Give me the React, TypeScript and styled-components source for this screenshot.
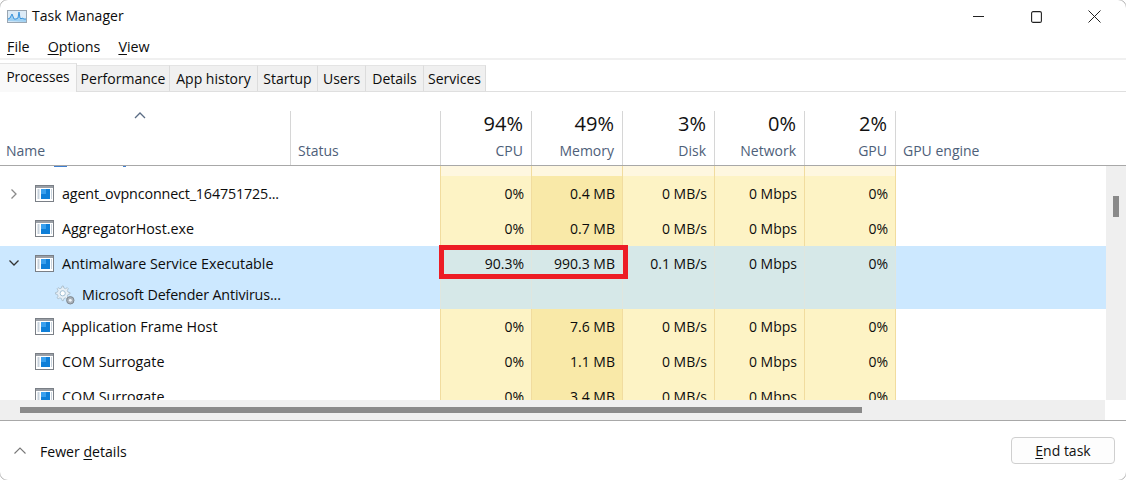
import React from "react";
import styled, { createGlobalStyle } from "styled-components";

const Global = createGlobalStyle`
  html, body { margin: 0; padding: 0; background: #fff; }
  body { font-family: "Open Sans", "Noto Sans", "Liberation Sans", sans-serif; color: #0c0c0c; overflow: hidden; }
`;

const HEAD_COLS = "291px 150px 91px 91px 92px 90px 91px 1fr";
const ROW_COLS = "290px 150px 91px 91px 92px 90px 91px 1fr";

const Window = styled.div`
  position: relative;
  width: 1126px;
  height: 480px;
  overflow: hidden;
  background: #fff;
  display: flex;
  flex-direction: column;
  font-size: 14px;
  &::after {
    content: "";
    position: absolute;
    inset: -1px;
    border: 1px solid #b5b5b5;
    border-radius: 9px;
    pointer-events: none;
  }
`;
const TitleBar = styled.div`
  height: 33px;
  flex: none;
  display: flex;
  align-items: center;
  padding-left: 7px;
`;
const TitleText = styled.span`
  margin-left: 5px;
  font-size: 14px;
  letter-spacing: 0.06px;
  position: relative;
  top: -1px;
`;
const WindowControls = styled.div`
  margin-left: auto;
  display: flex;
  align-items: center;
`;
const ControlSlot = styled.div`
  width: 58px;
  height: 33px;
  display: flex;
  align-items: center;
  justify-content: center;
  padding-right: 5px;
  box-sizing: border-box;
`;
const MenuBar = styled.div`
  height: 25px;
  flex: none;
  display: flex;
  align-items: center;
  gap: 18px;
  padding: 2px 0 0 7px;
  box-sizing: border-box;
  font-size: 14.3px;
`;
const Band = styled.div`
  height: 2px;
  flex: none;
  background: #f0f0f0;
`;
const TabBar = styled.div`
  height: 32px;
  flex: none;
  display: flex;
  align-items: flex-end;
  border-bottom: 1px solid #dfdfdf;
  box-sizing: border-box;
`;
const Tab = styled.div<{ $w: number; $active?: boolean }>`
  width: ${(p) => p.$w}px;
  height: ${(p) => (p.$active ? 29 : 26)}px;
  box-sizing: border-box;
  flex: none;
  background: ${(p) => (p.$active ? "#f9f9f9" : "#f0f0f0")};
  border-right: 1px solid #dcdcdc;
  border-top: 1px solid #e4e4e4;
  margin-bottom: ${(p) => (p.$active ? -1 : 0)}px;
  display: flex;
  align-items: center;
  justify-content: center;
  font-size: ${(p) => (p.$active ? 13.6 : 14)}px;
  padding-bottom: ${(p) => (p.$active ? 3 : 1)}px;
`;
const HeaderArea = styled.div`
  height: 74px;
  flex: none;
  padding-top: 19px;
  box-sizing: border-box;
  border-bottom: 1px solid #a8a8a8;
  position: relative;
`;
const HeaderGrid = styled.div`
  display: grid;
  grid-template-columns: ${HEAD_COLS};
  width: 1106px;
  height: 54px;
`;
const HeaderCell = styled.div<{ $end?: boolean; $noline?: boolean; $first?: boolean }>`
  position: relative;
  box-sizing: border-box;
  display: flex;
  flex-direction: column;
  justify-content: flex-end;
  align-items: ${(p) => (p.$end ? "flex-end" : "flex-start")};
  padding: 0 8px 5px ${(p) => (p.$end ? 0 : p.$first ? 6 : 7)}px;
  border-right: ${(p) => (p.$noline ? "none" : "1px solid #d6d6d6")};
`;
const Pct = styled.div`
  font-size: 20px;
  line-height: 26px;
  color: #111;
  margin-bottom: 4px;
`;
const ColLabel = styled.div`
  font-size: 14px;
  line-height: 19px;
  color: #4e6079;
`;
const SortCaret = styled.svg`
  position: absolute;
  left: 134px;
  top: 1px;
`;
const Body = styled.div`
  height: 234px;
  flex: none;
  display: flex;
`;
const Rows = styled.div`
  width: 1106px;
  flex: none;
  overflow: hidden;
`;
const Row = styled.div<{ $h: number; $sel?: boolean }>`
  display: grid;
  grid-template-columns: ${ROW_COLS};
  height: ${(p) => p.$h}px;
  background: ${(p) => (p.$sel ? "#cce8ff" : "#fff")};
  flex: none;
`;
const NameCell = styled.div<{ $sub?: boolean; $nudge?: number }>`
  grid-column: span 2;
  display: flex;
  align-items: center;
  padding-left: ${(p) => (p.$sub ? 55 : 0)}px;
  padding-top: ${(p) => p.$nudge ?? 0}px;
  box-sizing: border-box;
  font-size: 14.3px;
  white-space: nowrap;
  overflow: hidden;
`;
const ClippedNameCell = styled.div`
  grid-column: span 2;
`;
const ChevronSlot = styled.div`
  width: 35px;
  flex: none;
  display: flex;
  justify-content: flex-start;
  padding-left: 9px;
  box-sizing: border-box;
`;
const IconGap = styled.span<{ $w: number }>`
  width: ${(p) => p.$w}px;
  flex: none;
`;
const Label = styled.span<{ $tight?: boolean }>`
  letter-spacing: ${(p) => (p.$tight ? "-0.14px" : "0")};
`;
const BlueMark = styled.div`
  width: 72px;
  height: 1px;
  margin-left: 54px;
  background: linear-gradient(90deg, #3f7fd0 0 13px, transparent 13px 69px, #3f7fd0 69px 72px);
`;
const Cell = styled.div<{ $bg: string; $line: string; $nudge?: number }>`
  box-sizing: border-box;
  background: ${(p) => p.$bg};
  border-left: 1px solid ${(p) => p.$line};
  display: flex;
  align-items: center;
  justify-content: flex-end;
  padding-right: 7px;
  padding-top: ${(p) => p.$nudge ?? 0}px;
  font-size: 14px;
  white-space: nowrap;
`;
const EngineCell = styled.div<{ $line: string }>`
  border-left: 1px solid ${(p) => p.$line};
`;
const HBar = styled.div`
  height: 20px;
  flex: none;
  width: 1105px;
  background: #efefef;
  padding: 7px 0 0 20px;
  box-sizing: border-box;
`;
const HThumb = styled.div`
  width: 842px;
  height: 6px;
  background: #8a8a8a;
`;
const VBar = styled.div`
  flex: 1;
  background: #efefef;
  padding: 30px 7px 0;
  box-sizing: border-box;
`;
const VThumb = styled.div`
  width: 6px;
  height: 21px;
  background: #8a8a8a;
`;
const Footer = styled.div`
  flex: 1;
  border-top: 1px solid #a8a8a8;
  display: flex;
  align-items: center;
  padding: 0 11px 0 14px;
  position: relative;
`;
const FewerText = styled.span`
  margin-left: 14px;
  font-size: 14.1px;
  padding-top: 2px;
`;
const EndTask = styled.button`
  margin-left: auto;
  width: 104px;
  height: 27px;
  box-sizing: border-box;
  background: #fdfdfd;
  border: 1px solid #cfcfcf;
  border-radius: 4px;
  font-family: inherit;
  font-size: 14px;
  color: #111;
  padding: 0;
`;
const Highlight = styled.div`
  position: absolute;
  left: 439px;
  top: 245px;
  width: 189px;
  height: 34px;
  box-sizing: border-box;
  border: 5px solid #ed1c24;
  pointer-events: none;
`;

const AppIcon = () => (
  <svg width="19" height="17" viewBox="0 0 19 17">
    <rect x="0.5" y="0.5" width="18" height="16" fill="#fff" stroke="#7a7f86" />
    <rect x="1" y="1" width="17" height="2" fill="#9a9fa6" />
    <rect x="6" y="4" width="9" height="10" fill="#0f7fd8" />
    <rect x="6" y="4" width="5" height="5" fill="#3aa0ee" />
    <path d="M2.5 5h2M2.5 7h2M2.5 9h2M2.5 11h2M2.5 13h2M16 5h1M16 7h1M16 9h1M16 11h1M16 13h1" stroke="#8fa4b8" />
  </svg>
);

const TmIcon = () => (
  <svg width="20" height="13" viewBox="0 0 20 13">
    <rect x="0.5" y="0.5" width="19" height="12" fill="#dcebf7" stroke="#9aa6b2" />
    <path d="M1 11V9l2-1 2-4 2 5 2 0 2-1 1-6 1 6 1 1 1-1 2 1 2 0v3z" fill="#9fd0f2" />
    <path d="M1 9l2-1 2-4 2 5h2l2-1 1-6 1 6 1 1 1-1 2 1h2" fill="none" stroke="#3a94dc" />
  </svg>
);

const GearIcon = () => (
  <svg width="20" height="20" viewBox="0 0 20 20">
    <path d="M7 1l1.400 0 .5 2 1.600.7 1.800-1 1 1-1 1.800.7 1.600 2 .5v1.400l-2 .5-.7 1.600 1 1.800-1 1-1.800-1-1.600.7-.5 2H7l-.5-2-1.600-.7-1.800 1-1-1 1-1.800-.7-1.600-2-.5V7.600l2-.5.7-1.600-1-1.800 1-1 1.800 1 1.600-.7z" fill="#e6eff6" stroke="#a6bac8" strokeWidth="0.8" />
    <circle cx="7.700" cy="8.300" r="2.600" fill="#fff" stroke="#a2c0d4" />
    <circle cx="15.300" cy="15.300" r="3.700" fill="#aab2ba" stroke="#7f8890" />
    <circle cx="15.300" cy="15.300" r="1.400" fill="#f2f6fa" />
  </svg>
);

const Chevron = ({ dir, color }: { dir: "right" | "down"; color: string }) => (
  <svg width="10" height="10" viewBox="0 0 10 10">
    <path
      d={dir === "right" ? "M2.500 0.500l4.500 4.500-4.500 4.500" : "M0.500 2.500l4.500 4.500 4.500-4.500"}
      fill="none"
      stroke={color}
      strokeWidth="1.300"
    />
  </svg>
);

const tabs: [string, number, boolean?][] = [
  ["Processes", 77, true],
  ["Performance", 93],
  ["App history", 88],
  ["Startup", 60],
  ["Users", 48],
  ["Details", 58],
  ["Services", 62],
];

const YELLOW = "#fdf3c5";
const AMBER = "#f9e9a8";
const LINE = "#f1dc9f";
const SEL = "#d6e8e8";
const SEL_LINE = "#dfe6df";

type RowData = {
  name: string;
  vals: string[];
  chevron?: "right" | "down";
  h: number;
  sel?: boolean;
  tight?: boolean;
  nudge?: number;
};
const rows: RowData[] = [
  { name: "agent_ovpnconnect_164751725...", vals: ["0%", "0.4 MB", "0 MB/s", "0 Mbps", "0%"], chevron: "right", h: 35, tight: true },
  { name: "AggregatorHost.exe", vals: ["0%", "0.7 MB", "0 MB/s", "0 Mbps", "0%"], h: 35 },
  { name: "Antimalware Service Executable", vals: ["90.3%", "990.3 MB", "0.1 MB/s", "0 Mbps", "0%"], chevron: "down", h: 32, sel: true, nudge: 2 },
];
const rowsAfter: RowData[] = [
  { name: "Application Frame Host", vals: ["0%", "7.6 MB", "0 MB/s", "0 Mbps", "0%"], h: 35 },
  { name: "COM Surrogate", vals: ["0%", "1.1 MB", "0 MB/s", "0 Mbps", "0%"], h: 35 },
  { name: "COM Surrogate", vals: ["0%", "3.4 MB", "0 MB/s", "0 Mbps", "0%"], h: 35 },
];

const Under = styled.span`
  text-decoration: underline;
  text-underline-offset: 2px;
  text-decoration-thickness: 1px;
`;

const ProcessRow = ({ r }: { r: RowData }) => (
  <Row $h={r.h} $sel={r.sel}>
    <NameCell $nudge={r.nudge}>
      <ChevronSlot>
        {r.chevron && <Chevron dir={r.chevron} color={r.sel ? "#333" : "#8a8a8a"} />}
      </ChevronSlot>
      <AppIcon />
      <IconGap $w={8} />
      <Label $tight={r.tight}>{r.name}</Label>
    </NameCell>
    {r.vals.map((v, i) => (
      <Cell
        key={i}
        $nudge={r.nudge}
        $bg={r.sel ? SEL : i === 1 ? AMBER : YELLOW}
        $line={r.sel ? SEL_LINE : LINE}
      >
        {v}
      </Cell>
    ))}
    <EngineCell $line={r.sel ? SEL_LINE : LINE} />
  </Row>
);

const App = () => (
  <Window>
    <Global />
    <TitleBar>
      <TmIcon />
      <TitleText>Task Manager</TitleText>
      <WindowControls>
        <ControlSlot>
          <svg width="11" height="1"><rect width="11" height="1" fill="#222" /></svg>
        </ControlSlot>
        <ControlSlot>
          <svg width="11" height="12" viewBox="0 0 11 12">
            <rect x="0.600" y="0.600" width="9.800" height="10.800" rx="1.500" fill="none" stroke="#222" strokeWidth="1.100" />
          </svg>
        </ControlSlot>
        <ControlSlot>
          <svg width="13" height="13" viewBox="0 0 13 13">
            <path d="M0.500 0.500l12 12M12.500 0.500l-12 12" stroke="#222" strokeWidth="1" fill="none" />
          </svg>
        </ControlSlot>
      </WindowControls>
    </TitleBar>
    <MenuBar>
      <span><Under>F</Under>ile</span>
      <span><Under>O</Under>ptions</span>
      <span><Under>V</Under>iew</span>
    </MenuBar>
    <Band />
    <TabBar>
      {tabs.map(([t, w, a]) => (
        <Tab key={t} $w={w} $active={a}>{t}</Tab>
      ))}
    </TabBar>
    <HeaderArea>
      <HeaderGrid>
        <HeaderCell $first>
          <SortCaret width="12" height="7" viewBox="0 0 12 7">
            <path d="M1 6l5-5 5 5" fill="none" stroke="#5a6c84" strokeWidth="1.300" />
          </SortCaret>
          <ColLabel>Name</ColLabel>
        </HeaderCell>
        <HeaderCell><ColLabel>Status</ColLabel></HeaderCell>
        <HeaderCell $end><Pct>94%</Pct><ColLabel>CPU</ColLabel></HeaderCell>
        <HeaderCell $end><Pct>49%</Pct><ColLabel>Memory</ColLabel></HeaderCell>
        <HeaderCell $end><Pct>3%</Pct><ColLabel>Disk</ColLabel></HeaderCell>
        <HeaderCell $end><Pct>0%</Pct><ColLabel>Network</ColLabel></HeaderCell>
        <HeaderCell $end><Pct>2%</Pct><ColLabel>GPU</ColLabel></HeaderCell>
        <HeaderCell $noline><ColLabel>GPU engine</ColLabel></HeaderCell>
      </HeaderGrid>
    </HeaderArea>
    <Body>
      <Rows>
        <Row $h={10}>
          <ClippedNameCell><BlueMark /></ClippedNameCell>
          {[0, 1, 2, 3, 4].map((i) => (
            <Cell key={i} $bg="#fef7e0" $line={LINE} />
          ))}
          <EngineCell $line={LINE} />
        </Row>
        {rows.map((r, i) => <ProcessRow key={i} r={r} />)}
        <Row $h={31} $sel>
          <NameCell $sub $nudge={2}>
            <GearIcon />
            <IconGap $w={7} />
            <Label $tight>Microsoft Defender Antivirus...</Label>
          </NameCell>
          {[0, 1, 2, 3, 4].map((i) => (
            <Cell key={i} $bg={SEL} $line={SEL_LINE} />
          ))}
          <EngineCell $line={SEL_LINE} />
        </Row>
        {rowsAfter.map((r, i) => <ProcessRow key={i} r={r} />)}
      </Rows>
      <VBar><VThumb /></VBar>
    </Body>
    <HBar><HThumb /></HBar>
    <Footer>
      <svg width="12" height="7" viewBox="0 0 12 7">
        <path d="M0.500 6.500l5.500-5.500 5.500 5.500" fill="none" stroke="#777" strokeWidth="1.100" />
      </svg>
      <FewerText>Fewer <Under>d</Under>etails</FewerText>
      <EndTask><Under>E</Under>nd task</EndTask>
    </Footer>
    <Highlight />
  </Window>
);

export default App;
